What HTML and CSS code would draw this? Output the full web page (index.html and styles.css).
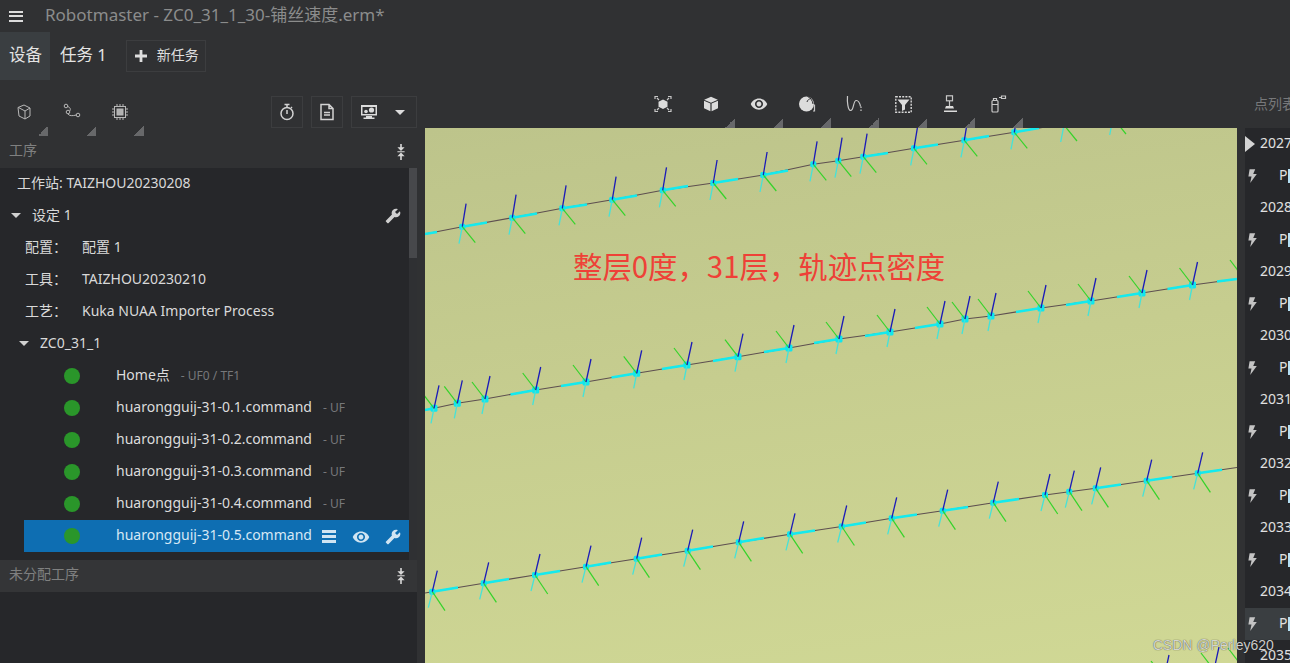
FILE: index.html
```html
<!DOCTYPE html>
<html lang="zh">
<head>
<meta charset="utf-8">
<title>Robotmaster</title>
<link rel="stylesheet" href="styles.css">
</head>
<body>
<svg class="defs" width="0" height="0" aria-hidden="true">
  <defs>
    <symbol id="i-wrench" viewBox="0 0 24 24"><path transform="matrix(-1 0 0 1 24 0)" d="M22.7 19l-9.1-9.1c.9-2.3.4-5-1.5-6.9-2-2-5-2.4-7.4-1.3L9 6 6 9 1.6 4.7C.4 7.1.9 10.1 2.9 12.1c1.9 1.9 4.6 2.4 6.9 1.5l9.1 9.1c.4.4 1 .4 1.4 0l2.3-2.3c.5-.4.5-1.1.1-1.4z"/></symbol>
    <symbol id="i-eye" viewBox="0 0 24 24"><path fill-rule="evenodd" d="M12 4.5C7 4.5 2.73 7.61 1 12c1.73 4.39 6 7.5 11 7.5s9.27-3.11 11-7.5c-1.73-4.39-6-7.5-11-7.5zM12 17.4c-3 0-5.4-2.4-5.4-5.4s2.4-5.4 5.4-5.4 5.4 2.4 5.4 5.4-2.4 5.4-5.4 5.4zm0-8.6c-1.77 0-3.2 1.43-3.2 3.2s1.43 3.2 3.2 3.2 3.2-1.43 3.2-3.2-1.43-3.2-3.2-3.2z"/></symbol>
    <symbol id="i-bolt" viewBox="0 0 16 16"><path d="M4.6 1.2h5.6L8.2 6h3.6l-6.6 9 1.3-6.6H3.4z"/></symbol>
    <symbol id="i-collapse" viewBox="0 0 10 16"><path d="M4.2 0h1.6v3.2H8.6L5 7 1.4 3.2h2.8zM1.4 7.2h7.2v1H1.4zM5 8.6l3.6 3.6H5.8V16H4.2v-3.8H1.4z"/></symbol>
    <g id="a1">
      <rect class="node" x="-3" y="-3" width="6" height="6" rx="1.5"/><path class="arm-c" d="M0 0L-3.3 17"/><path class="arm-g" d="M0 0L13 16"/><path class="arm-b" d="M0 0L3.8 -23"/>
    </g>
    <g id="a2">
      <rect class="node" x="-3.5" y="-3.5" width="7" height="7" rx="1.5"/><path class="arm-c" d="M0 0L-3 15"/><path class="arm-g" d="M0 0L-13 -17"/><path class="arm-b" d="M0 0L5 -23"/>
    </g>
    <g id="a3">
      <rect class="node" x="-3" y="-3" width="6" height="6" rx="1.5"/><path class="arm-c" d="M0 0L-4 16"/><path class="arm-g" d="M0 0L12.7 19"/><path class="arm-b" d="M0 0L5 -21"/>
    </g>
  </defs>
</svg>

<div class="app">
  <header class="titlebar">
    <span class="burger"><i></i><i></i><i></i></span>
    <span class="title">Robotmaster - ZC0_31_1_30-铺丝速度.erm*</span>
  </header>

  <nav class="tabs">
    <span class="tab active">设备</span>
    <span class="tab">任务 1</span>
    <button class="newtask"><svg width="14" height="14" viewBox="0 0 14 14"><path d="M5.6 1h2.8v4.6H13v2.8H8.4V13H5.6V8.4H1V5.6h4.6z"/></svg>新任务</button>
  </nav>

  <div class="workspace">
    <aside class="left">
      <div class="left-tools">
        <div class="tool-group">
          <span class="tool corner">
            <svg width="18" height="18" viewBox="0 0 18 18" class="line"><path d="M3 4.5L9 2l6 3v8l-5 3-6-3zM3.5 4.5L10 8v8M10 8l5-3"/></svg>
          </span>
          <span class="tool corner">
            <svg width="18" height="16" viewBox="0 0 18 16" class="line"><circle cx="3" cy="3" r="1.8"/><circle cx="5" cy="9" r="1.8"/><circle cx="15" cy="12" r="1.8"/><path d="M4.8 3.5C8 5 7.5 6.5 6.8 8M5 11c1 2 5 2 8.2 1"/></svg>
          </span>
          <span class="tool corner">
            <svg width="18" height="18" viewBox="0 0 18 18" class="line"><rect x="3.5" y="3.5" width="11" height="11"/><rect class="fillgrey" x="6" y="6" width="6" height="6"/><path d="M6 1v2M9 1v2M12 1v2M6 15v2M9 15v2M12 15v2M1 6h2M1 9h2M1 12h2M15 6h2M15 9h2M15 12h2"/></svg>
          </span>
        </div>
        <div class="btn-group">
          <button class="box-btn"><svg width="16" height="18" viewBox="0 0 16 18" class="line thick"><circle cx="8" cy="10.5" r="6"/><path d="M8 7v4M5.5 1.5h5M8 2v2.5M13 4l-1 1"/></svg></button>
          <button class="box-btn"><svg width="16" height="18" viewBox="0 0 16 18" class="line thick"><path d="M2 1.5h8l4 4V16.5H2zM10 1.5v4h4M5 9.5h6M5 12h6"/></svg></button>
          <button class="box-btn wide">
            <svg width="18" height="16" viewBox="0 0 18 16"><path class="fill-light" fill-rule="evenodd" d="M1 1h16v10.5H1zM2.5 3v7h13V3z"/><path class="fill-light" d="M6 12h6v1.5h2.5V15h-11v-1.5H6z"/><circle class="fill-light" cx="6" cy="7.5" r="1.8"/><circle class="fill-light" cx="11.5" cy="6" r="2.6"/></svg>
            <span class="caret"></span>
          </button>
        </div>
      </div>

      <div class="sec-head"><span>工序</span><svg class="collapse" width="10" height="16"><use href="#i-collapse"/></svg></div>

      <div class="tree-wrap">
        <div class="tree">
          <div class="row r-station">工作站: TAIZHOU20230208</div>
          <div class="row r-setup"><span class="tri"></span><span class="grow">设定 1</span><svg class="ico" width="16" height="16"><use href="#i-wrench"/></svg></div>
          <div class="row r-prop"><span class="key">配置：</span><span>配置 1</span></div>
          <div class="row r-prop"><span class="key">工具：</span><span>TAIZHOU20230210</span></div>
          <div class="row r-prop"><span class="key">工艺：</span><span>Kuka NUAA Importer Process</span></div>
          <div class="row r-group"><span class="tri"></span><span>ZC0_31_1</span></div>
          <div class="row r-op"><i class="dot"></i><span class="op-text">Home点<em>- UF0 / TF1</em></span></div>
          <div class="row r-op"><i class="dot"></i><span class="op-text">huarongguij-31-0.1.command<em>- UF0 / TF1</em></span></div>
          <div class="row r-op"><i class="dot"></i><span class="op-text">huarongguij-31-0.2.command<em>- UF0 / TF1</em></span></div>
          <div class="row r-op"><i class="dot"></i><span class="op-text">huarongguij-31-0.3.command<em>- UF0 / TF1</em></span></div>
          <div class="row r-op"><i class="dot"></i><span class="op-text">huarongguij-31-0.4.command<em>- UF0 / TF1</em></span></div>
          <div class="row r-op selected"><i class="dot"></i><span class="op-text sel-text">huarongguij-31-0.5.command</span>
            <span class="acts">
              <span class="menu-ico"><i></i><i></i><i></i></span>
              <svg class="ico" width="18" height="18"><use href="#i-eye"/></svg>
              <svg class="ico" width="16" height="16"><use href="#i-wrench"/></svg>
            </span>
          </div>
        </div>
        <div class="scroll"><div class="thumb"></div></div>
      </div>

      <div class="sec-head alt"><span>未分配工序</span><svg class="collapse" width="10" height="16"><use href="#i-collapse"/></svg></div>
      <div class="left-rest"></div>
    </aside>

    <main class="center">
      <div class="view-tools">
        <span class="tool2">
          <svg width="18" height="18" viewBox="0 0 18 18"><path class="fill-light" d="M9 4.5l4.5 2.2v5L9 14l-4.5-2.3v-5z"/><path class="line-s" d="M1 4V1.5h3M14 1.5h3V4M1 14v2.5h3M14 16.5h3V14M3 3l2 2M15 3l-2 2M3 15l2-2M15 15l-2-2"/></svg>
        </span>
        <span class="tool2 corner">
          <svg width="16" height="16" viewBox="0 0 16 16"><path class="fill-light" d="M8 .8l6.8 3L8 6.7 1.2 3.8zM1 4.8l6.400 2.800v7.600L1 12.200zM15 4.800l-6.400 2.800v7.600l6.400-3z"/></svg>
        </span>
        <span class="tool2 corner">
          <svg width="18" height="18" viewBox="0 0 24 24" class="fill-light"><use href="#i-eye"/></svg>
        </span>
        <span class="tool2 corner">
          <svg width="18" height="18" viewBox="0 0 18 18"><circle class="fill-light" cx="8.5" cy="9" r="7.5"/><path class="dark-s" d="M9.5 1.5c3 1 5 4 5.500 7.500M13 3.500c-2 .5-3.500 1.500-4 3.500"/><path class="line-s" d="M16.500 9.500v6.500h-1.500"/></svg>
        </span>
        <span class="tool2 corner">
          <svg width="18" height="18" viewBox="0 0 18 18"><path class="line-s" d="M1.500 1c-.5 6 .5 14 3 14.500C8 16 7 6 10 5.500c2.500-.3 4 3.500 4.500 6"/><path class="line-s dotted" d="M15 11.500v5"/></svg>
        </span>
        <span class="tool2 corner">
          <svg width="17" height="17" viewBox="0 0 17 17"><rect class="dash" x=".8" y=".8" width="15.400" height="15.400"/><path class="fill-light" d="M2.500 3.500h12L10 9v4.500l-3 1.500V9z"/></svg>
        </span>
        <span class="tool2 corner">
          <svg width="14" height="18" viewBox="0 0 14 18"><rect class="line-s" x="2.500" y=".8" width="6" height="5"/><path class="line-s" d="M5.500 6v5"/><path class="fill-light" d="M2 11h7l1 2.500H1zM0 15.500h13V17H0z"/></svg>
        </span>
        <span class="tool2 corner">
          <svg width="16" height="18" viewBox="0 0 16 18"><rect class="line-s" x="1" y="5.500" width="6" height="11.500" rx="1"/><path class="line-s" d="M2.500 5.500V3.500h3v2M1 9.500h6M8 2.500h2M10.500 1h4v2.500h-4z"/></svg>
        </span>
      </div>

      <div class="canvas">
        <svg class="scene" width="812" height="535" viewBox="425 128 812 535">
          <path class="track" d="M425 234L462.300 226.700 512.300 217.700 562.300 208.300 612.300 199.700 662.700 190.300 713.300 183 763.300 175 813.300 164.300 838.300 160.700 863.300 156.700 914 148.300 964.300 140.300 1014.300 132.300 1045 127"/>
          <path class="thick" d="M425 234L437 232M462.300 226.700L487 222.500M512.300 217.700L537 213.500M562.300 208.300L587 204.500M612.300 199.700L637 195.500M662.700 190.300L688 186M713.300 183L738 179M763.300 175L788 170.500M863.300 156.700L888 153M914 148.300L938 144.500M964.300 140.300L989 136M1014.300 132.300L1039 128"/>
          <use href="#a1" x="462.300" y="226.700"/><use href="#a1" x="512.300" y="217.700"/><use href="#a1" x="562.300" y="208.300"/><use href="#a1" x="612.300" y="199.700"/><use href="#a1" x="662.700" y="190.300"/><use href="#a1" x="713.300" y="183"/><use href="#a1" x="763.300" y="175"/><use href="#a1" x="813.300" y="164.300"/><use href="#a1" x="838.300" y="160.700"/><use href="#a1" x="863.300" y="156.700"/><use href="#a1" x="914" y="148.300"/><use href="#a1" x="964.300" y="140.300"/><use href="#a1" x="1014.300" y="132.300"/><use href="#a1" x="1064" y="125"/><use href="#a1" x="1113" y="118"/>

          <path class="track" d="M425 410L434 408.300 457.300 403.300 485 399 535.700 390 586 382 636.700 373.300 687 365 738 356.700 789 348 839 339 890 332 940 324 965 319 991 316 1041 308 1091 301 1142 293 1192.500 285 1237 279"/>
          <path class="thick" d="M425 410L434 408.300M510.500 394.500L535.700 390M561 386L586 382M611.500 377.500L636.700 373.300M662 369L687 365M713 361L738 356.700M764 352L789 348M814 343L839 339M865 336L890 332M915 328L940 324M1016 312L1041 308M1066 305L1091 301M1117 297L1142 293M1167.500 289L1192.500 285M1217 281.500L1237 279"/>
          <use href="#a2" x="434" y="408.300"/><use href="#a2" x="457.300" y="403.300"/><use href="#a2" x="485" y="399"/><use href="#a2" x="535.700" y="390"/><use href="#a2" x="586" y="382"/><use href="#a2" x="636.700" y="373.300"/><use href="#a2" x="687" y="365"/><use href="#a2" x="738" y="356.700"/><use href="#a2" x="789" y="348"/><use href="#a2" x="839" y="339"/><use href="#a2" x="890" y="332"/><use href="#a2" x="940" y="324"/><use href="#a2" x="965" y="319"/><use href="#a2" x="991" y="316"/><use href="#a2" x="1041" y="308"/><use href="#a2" x="1091" y="301"/><use href="#a2" x="1142" y="293"/><use href="#a2" x="1192.500" y="285"/><use href="#a2" x="1243" y="277"/>

          <path class="track" d="M425 593L432.300 591.700 483.700 583.300 535 575 586 566.700 636.700 558.700 687.700 550.700 738.700 542.300 790 534.300 841.700 526.500 891.700 518.300 942.700 510.700 993.300 502.700 1045 495 1069.300 491.700 1095.700 488.300 1146.700 480.700 1197.700 473.300 1237 467.500"/>
          <path class="thick" d="M432.300 591.700L458 587.500M483.700 583.300L509 579M535 575L560 571M586 566.700L611 562.500M636.700 558.700L662 554.500M687.700 550.700L713 546.500M738.700 542.300L764 538M790 534.300L815 530.500M841.700 526.500L866 522.500M891.700 518.300L917 514.500M942.700 510.700L968 507M993.300 502.700L1019 499M1095.700 488.300L1121 484.500M1146.700 480.700L1172 477M1197.700 473.300L1222 469.800"/>
          <use href="#a3" x="432.300" y="591.700"/><use href="#a3" x="483.700" y="583.300"/><use href="#a3" x="535" y="575"/><use href="#a3" x="586" y="566.700"/><use href="#a3" x="636.700" y="558.700"/><use href="#a3" x="687.700" y="550.700"/><use href="#a3" x="738.700" y="542.300"/><use href="#a3" x="790" y="534.300"/><use href="#a3" x="841.700" y="526.500"/><use href="#a3" x="891.700" y="518.300"/><use href="#a3" x="942.700" y="510.700"/><use href="#a3" x="993.300" y="502.700"/><use href="#a3" x="1045" y="495"/><use href="#a3" x="1069.300" y="491.700"/><use href="#a3" x="1095.700" y="488.300"/><use href="#a3" x="1146.700" y="480.700"/><use href="#a3" x="1197.700" y="473.300"/>

          <use href="#a2" x="1164" y="678"/><use href="#a2" x="1214" y="670"/><use href="#a2" x="1241" y="665"/>
        </svg>
        <div class="note">整层0度，31层，轨迹点密度</div>
      </div>
    </main>

    <aside class="right">
      <div class="right-head">点列表</div>
      <div class="points">
        <div class="pt"><span class="play"></span><span class="num first">2027</span></div>
        <div class="pt"><svg class="bolt" width="16" height="16"><use href="#i-bolt"/></svg><span class="p">P</span><i class="bar"></i></div>
        <div class="pt"><span class="num">2028</span></div>
        <div class="pt"><svg class="bolt" width="16" height="16"><use href="#i-bolt"/></svg><span class="p">P</span><i class="bar"></i></div>
        <div class="pt"><span class="num">2029</span></div>
        <div class="pt"><svg class="bolt" width="16" height="16"><use href="#i-bolt"/></svg><span class="p">P</span><i class="bar"></i></div>
        <div class="pt"><span class="num">2030</span></div>
        <div class="pt"><svg class="bolt" width="16" height="16"><use href="#i-bolt"/></svg><span class="p">P</span><i class="bar"></i></div>
        <div class="pt"><span class="num">2031</span></div>
        <div class="pt"><svg class="bolt" width="16" height="16"><use href="#i-bolt"/></svg><span class="p">P</span><i class="bar"></i></div>
        <div class="pt"><span class="num">2032</span></div>
        <div class="pt"><svg class="bolt" width="16" height="16"><use href="#i-bolt"/></svg><span class="p">P</span><i class="bar"></i></div>
        <div class="pt"><span class="num">2033</span></div>
        <div class="pt"><svg class="bolt" width="16" height="16"><use href="#i-bolt"/></svg><span class="p">P</span><i class="bar"></i></div>
        <div class="pt"><span class="num">2034</span></div>
        <div class="pt hl"><svg class="bolt" width="16" height="16"><use href="#i-bolt"/></svg><span class="p">P</span><i class="bar"></i></div>
        <div class="pt"><span class="num">2035</span></div>
      </div>
    </aside>
  </div>

  <div class="watermark">CSDN @Perley620</div>
</div>
</body>
</html>
```

FILE: styles.css
```css
* { box-sizing: border-box; }

html, body {
  margin: 0;
  height: 100%;
  overflow: hidden;
}

body {
  background: #303133;
  color: #dcdcdc;
  font-family: "Noto Sans", "Noto Sans CJK SC", sans-serif;
  font-size: 14px;
}

.defs { position: absolute; }

button {
  font: inherit;
  color: inherit;
  background: none;
  padding: 0;
}

.app {
  position: relative;
  width: 1290px;
  height: 663px;
  display: flex;
  flex-direction: column;
  overflow: hidden;
}

/* title bar */
.titlebar {
  height: 32px;
  flex: none;
  display: flex;
  align-items: center;
  padding-left: 9px;
  gap: 22px;
}

.burger {
  display: flex;
  flex-direction: column;
  gap: 2.5px;
  width: 14px;
}

.burger i {
  display: block;
  height: 2px;
  background: #dcdcdc;
}

.title {
  font-size: 17px;
  color: #8b8c8c;
  padding-bottom: 6px;
}

/* tabs */
.tabs {
  height: 48px;
  flex: none;
  display: flex;
  align-items: center;
}

.tab {
  height: 48px;
  display: flex;
  align-items: center;
  padding: 0 9px 4px;
  font-size: 16.5px;
  color: #e4e4e4;
  white-space: nowrap;
}

.tab.active {
  width: 50px;
  margin-right: 1px;
  background: #3a3e41;
}

.newtask {
  margin-left: 10px;
  width: 80px;
  height: 32px;
  margin-top: -1px;
  border: 1px solid #3c3d3f;
  display: flex;
  align-items: center;
  gap: 9px;
  padding: 0 0 3px 7px;
  font-size: 14px;
  color: #dedede;
}

.newtask svg { fill: #dedede; margin-top: 3px; }

/* workspace */
.workspace {
  flex: 1;
  min-height: 0;
  display: flex;
}

.left {
  width: 417px;
  flex: none;
  display: flex;
  flex-direction: column;
}

.left-tools {
  height: 56px;
  flex: none;
  padding-top: 16px;
  display: flex;
  justify-content: space-between;
}

.tool-group, .btn-group { display: flex; }

.btn-group { gap: 8px; height: 32px; }

.tool {
  position: relative;
  width: 48px;
  height: 40px;
  display: flex;
  justify-content: center;
  padding-top: 7px;
}

.tool2 {
  position: relative;
  width: 48px;
  height: 32px;
  display: flex;
  align-items: center;
  justify-content: center;
  padding-bottom: 16px;
}

.corner::after {
  content: "";
  position: absolute;
  right: 0;
  bottom: 0;
  width: 10px;
  height: 10px;
  background: linear-gradient(135deg, transparent 50%, #67686a 50%);
}

.line, .line-s, .dash {
  fill: none;
  stroke: #b8b8b8;
  stroke-width: 1;
}

.line.thick { stroke: #d2d2d2; stroke-width: 1.5; }

.fillgrey { fill: #b0b0b0; }

.line-s { stroke: #c8c8c8; stroke-width: 1.2; }

.dotted { stroke-dasharray: 1.5 1.5; }

.dash { stroke: #d8d8d8; stroke-width: 1.4; stroke-dasharray: 2 1.2; }

.fill-light { fill: #dcdcdc; }

.dark-s { fill: none; stroke: #303133; stroke-width: 1; }

.box-btn {
  width: 32px;
  height: 32px;
  border: 1px solid #3c3d3f;
  display: flex;
  align-items: center;
  justify-content: center;
}

.box-btn.wide {
  width: 66px;
  justify-content: flex-start;
  padding-left: 8px;
  gap: 17px;
}

.caret {
  width: 0;
  height: 0;
  border-left: 5px solid transparent;
  border-right: 5px solid transparent;
  border-top: 5px solid #dcdcdc;
}

.sec-head {
  height: 32px;
  flex: none;
  display: flex;
  align-items: center;
  justify-content: space-between;
  padding: 0 11px 6px 9px;
  font-size: 14px;
  color: #7f8080;
}

.sec-head.alt { background: #343537; }

.collapse { fill: #d8d8d8; margin-top: 6px; }

.tree-wrap {
  height: 392px;
  flex: none;
  display: flex;
  background: #26272a;
}

.tree {
  width: 409px;
  flex: none;
}

.scroll {
  flex: 1;
  background: #2f3033;
}

.thumb {
  height: 90px;
  background: #47484b;
}

.left-rest {
  flex: 1;
  background: #26272a;
}

.row {
  height: 32px;
  display: flex;
  align-items: center;
  padding-bottom: 4px;
  white-space: nowrap;
  color: #d9d9d9;
}

.r-station { padding-left: 17px; }

.r-setup {
  padding-left: 11px;
  padding-right: 8px;
}

.grow { flex: 1; }

.tri {
  width: 0;
  height: 0;
  margin-top: 2px;
  border-left: 5px solid transparent;
  border-right: 5px solid transparent;
  border-top: 5px solid #d0d0d0;
  margin-right: 11px;
}

.ico { fill: #cfcfcf; flex: none; margin-top: 3px; }

.r-prop { padding-left: 25px; }

.key { width: 57px; flex: none; }

.r-group { padding-left: 19px; }

.r-op { margin-left: 24px; }

.dot {
  width: 16px;
  height: 16px;
  border-radius: 50%;
  background: #2a962a;
  margin: 4px 36px 0 40px;
  flex: none;
}

.op-text {
  width: 229px;
  overflow: hidden;
  color: #dcdcdc;
}

.op-text em {
  font-style: normal;
  font-size: 12px;
  color: #77787a;
  margin-left: 11px;
}

.sel-text {
  width: 206px;
  color: #d6e8f5;
}

.selected { background: #0e6eb2; }

.acts {
  display: flex;
  align-items: center;
  gap: 15.5px;
  margin-top: 2px;
}

.acts .ico { fill: #d0e4f2; }

.menu-ico {
  width: 14px;
  display: flex;
  flex-direction: column;
  gap: 2.5px;
  margin-top: 3px;
}

.menu-ico i {
  display: block;
  height: 2.5px;
  background: #d0e4f2;
}

/* centre */
.center {
  width: 820px;
  flex: none;
  padding-left: 8px;
  display: flex;
  flex-direction: column;
}

.view-tools {
  height: 48px;
  flex: none;
  padding-top: 16px;
  display: flex;
  justify-content: center;
}

.canvas {
  position: relative;
  flex: 1;
  overflow: hidden;
  background: linear-gradient(172deg, #bdc48b 0%, #c6cd8f 45%, #d0d895 100%);
}

.scene { display: block; }

.track { fill: none; stroke: #5d4f50; stroke-width: 1.1; }

.thick { fill: none; stroke: #14eaee; stroke-width: 2.6; }

.arm-b { fill: none; stroke: #1a1ab8; stroke-width: 1.3; }

.arm-g { fill: none; stroke: #35d32a; stroke-width: 1.2; }

.arm-c { fill: none; stroke: #45e2d8; stroke-width: 1.3; }

.node { fill: #0fe6ee; }

.note {
  position: absolute;
  left: 148px;
  top: 116px;
  font-family: "Noto Sans CJK SC", sans-serif;
  font-size: 29.4px;
  line-height: 42px;
  color: #ee4137;
  white-space: nowrap;
}

/* right */
.right {
  flex: 1;
  padding-left: 8px;
  display: flex;
  flex-direction: column;
  min-width: 0;
}

.right-head {
  height: 48px;
  flex: none;
  padding: 13px 0 0 9px;
  font-size: 14px;
  color: #77787a;
  white-space: nowrap;
  overflow: hidden;
}

.points {
  flex: 1;
  background: #26272a;
  overflow: hidden;
}

.pt {
  height: 32px;
  display: flex;
  align-items: center;
  padding-bottom: 4px;
  white-space: nowrap;
  overflow: hidden;
  color: #e0e0e0;
}

.pt.hl { background: #3a3e41; }

.num { padding-left: 15px; }

.num.first { padding-left: 5px; }

.play {
  width: 0;
  height: 0;
  margin-top: 4px;
  border-top: 8px solid transparent;
  border-bottom: 8px solid transparent;
  border-left: 10px solid #d4d4d4;
}

.bolt { fill: #c4c4c4; flex: none; margin-top: 4px; }

.p { margin-left: 18px; }

.bar {
  width: 2px;
  height: 14px;
  margin: 3px 0 0 1px;
  background: #b5e0f5;
  flex: none;
}

.watermark {
  position: absolute;
  left: 1153px;
  top: 637px;
  font-family: "Liberation Sans", sans-serif;
  font-size: 14px;
  line-height: 17px;
  color: rgba(240, 240, 240, 0.85);
  text-shadow: 0 0 1px rgba(0, 0, 0, 0.85);
  white-space: nowrap;
}
```
